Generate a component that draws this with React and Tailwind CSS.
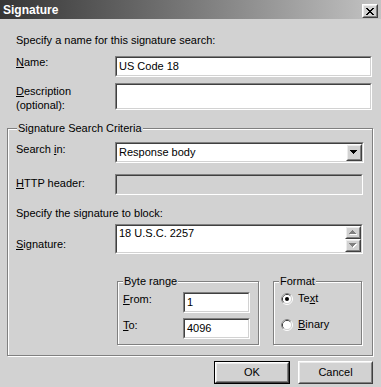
import React from "react";

function Sunken({ className = "", innerClassName = "", children }) {
  return (
    <div className={"border border-t-[#808080] border-l-[#808080] border-b-white border-r-white " + className}>
      <div className={"h-full w-full border border-t-[#404040] border-l-[#404040] border-b-[#d2d2d2] border-r-[#d2d2d2] " + innerClassName}>
        {children}
      </div>
    </div>
  );
}

function Raised({ className = "", innerClassName = "", children }) {
  return (
    <div className={"border border-t-white border-l-white border-b-[#404040] border-r-[#404040] " + className}>
      <div className={"h-full w-full border border-t-[#ececec] border-l-[#ececec] border-b-[#808080] border-r-[#808080] bg-[#d2d2d2] " + innerClassName}>
        {children}
      </div>
    </div>
  );
}

function Group({ label, className = "", labelClass = "", children }) {
  return (
    <div className={"relative border border-[#808080] shadow-[inset_1px_1px_0_#ffffff,1px_1px_0_#ffffff] " + className}>
      <span className={"absolute top-[-7px] bg-[#d2d2d2] px-[1px] leading-[13px] whitespace-nowrap " + labelClass}>{label}</span>
      {children}
    </div>
  );
}

function Radio({ checked }) {
  return (
    <svg width="12" height="12" viewBox="0 0 12 12" className="shrink-0">
      <circle cx="6" cy="6" r="5.5" fill="none" stroke="#ffffff" strokeWidth="1" />
      <path d="M2.11 9.89 A5.5 5.5 0 0 1 9.89 2.11" fill="none" stroke="#808080" strokeWidth="1" />
      <circle cx="6" cy="6" r="4.5" fill="none" stroke="#d2d2d2" strokeWidth="1" />
      <path d="M2.82 9.18 A4.5 4.5 0 0 1 9.18 2.82" fill="none" stroke="#404040" strokeWidth="1" />
      <circle cx="6" cy="6" r="4" fill="#ffffff" />
      {checked && <circle cx="6" cy="6" r="2" fill="#000000" />}
    </svg>
  );
}

function CloseGlyph() {
  const rows = [
    [0, 1, 6, 7],
    [1, 2, 5, 6],
    [2, 3, 4, 5],
    [3, 4],
    [2, 3, 4, 5],
    [1, 2, 5, 6],
    [0, 1, 6, 7],
  ];
  return (
    <svg width="8" height="7" viewBox="0 0 8 7" shapeRendering="crispEdges">
      {rows.map((cols, y) =>
        cols.map((x) => <rect key={y + "-" + x} x={x} y={y} width="1" height="1" fill="#000" />)
      )}
    </svg>
  );
}

function Arrow({ dir = "down", disabled = false }) {
  const pts = dir === "down" ? "0,0 7,0 3.5,4" : "0,4 7,4 3.5,0";
  return (
    <svg width="8" height="5" viewBox="0 0 8 5" shapeRendering="crispEdges">
      {disabled && <polygon points={dir === "down" ? "1,1 8,1 4.5,5" : "1,5 8,5 4.5,1"} fill="#ffffff" />}
      <polygon points={pts} fill={disabled ? "#808080" : "#000000"} />
    </svg>
  );
}

export default function App() {
  return (
    <div className="w-[381px] h-[387px] bg-[#d2d2d2] font-['Liberation_Sans',Arial,sans-serif] text-[11px] leading-[13px] text-black overflow-hidden flex flex-col">
      {/* Title bar */}
      <div className="h-[19px] shrink-0 flex items-start bg-linear-to-r from-[#363636] to-[#c4c4c4]">
        <span className="mt-[3px] ml-[3px] text-[12px] leading-[14px] font-bold text-white">Signature</span>
        <Raised className="ml-auto mt-[4px] mr-[3px] w-[16px] h-[14px]" innerClassName="flex items-center justify-center">
          <CloseGlyph />
        </Raised>
      </div>

      <div className="mt-[15px] ml-[16px]">Specify a name for this signature search:</div>

      <div className="mt-[9px] flex items-start">
        <div className="ml-[16px] w-[99px]">
          <span className="underline">N</span>ame:
        </div>
        <Sunken className="w-[257px] h-[21px]" innerClassName="bg-white pl-[2px] pt-[1px] leading-[14px]">
          US Code 18
        </Sunken>
      </div>

      <div className="mt-[6px] flex items-start">
        <div className="ml-[16px] w-[99px] pt-[1px] leading-[14px]">
          <span className="underline">D</span>escription
          <br />
          (optional):
        </div>
        <Sunken className="w-[257px] h-[27px]" innerClassName="bg-white" />
      </div>

      <Group
        label="Signature Search Criteria"
        labelClass="left-[9px]"
        className="mt-[16px] ml-[7px] w-[366px] h-[228px] shrink-0 flex flex-col"
      >
        <div className="mt-[13px] flex items-start">
          <div className="ml-[8px] w-[99px] pt-[1px]">
            Search <span className="underline">i</span>n:
          </div>
          <Sunken className="w-[249px] h-[21px]" innerClassName="bg-white flex items-start">
            <span className="pl-[2px] pt-[2px] leading-[13px] flex-1">Response body</span>
            <Raised className="w-[16px] h-[17px]" innerClassName="flex items-center justify-center">
              <Arrow dir="down" />
            </Raised>
          </Sunken>
        </div>

        <div className="mt-[11px] flex items-start">
          <div className="ml-[8px] w-[99px] pt-[3px]">
            <span className="underline">H</span>TTP header:
          </div>
          <Sunken className="w-[248px] h-[21px]" innerClassName="bg-[#d2d2d2]" />
        </div>

        <div className="mt-[12px] ml-[8px]">Specify the signature to block:</div>

        <div className="mt-[4px] flex items-start">
          <div className="ml-[8px] w-[99px] pt-[14px]">
            <span className="underline">S</span>ignature:
          </div>
          <Sunken className="w-[248px] h-[30px]" innerClassName="bg-white flex">
            <span className="flex-1 pl-[2px] pt-[1px]">18 U.S.C. 2257</span>
            <div className="w-[16px] flex flex-col">
              <Raised className="h-[13px]" innerClassName="flex items-center justify-center">
                <Arrow dir="up" disabled />
              </Raised>
              <Raised className="h-[13px]" innerClassName="flex items-center justify-center">
                <Arrow dir="down" disabled />
              </Raised>
            </div>
          </Sunken>
        </div>

        <div className="mt-[27px] flex items-start">
          <Group label="Byte range" labelClass="left-[5px]" className="ml-[109px] w-[142px] h-[64px] flex flex-col">
            <div className="mt-[10px] flex items-start">
              <div className="pl-[5px] w-[65px] pt-[1px]">
                <span className="underline">F</span>rom:
              </div>
              <Sunken className="w-[67px] h-[21px]" innerClassName="bg-white pl-[2px] pt-[2px]">
                1
              </Sunken>
            </div>
            <div className="mt-[5px] flex items-start">
              <div className="pl-[5px] w-[65px] pt-[1px]">
                <span className="underline">T</span>o:
              </div>
              <Sunken className="w-[67px] h-[21px]" innerClassName="bg-white pl-[2px] pt-[2px]">
                4096
              </Sunken>
            </div>
          </Group>

          <Group label="Format" labelClass="left-[5px]" className="ml-[14px] w-[89px] h-[64px] flex flex-col">
            <div className="mt-[10px] pl-[7px] flex items-center h-[13px]">
              <Radio checked />
              <span className="ml-[5px]">
                Te<span className="underline">x</span>t
              </span>
            </div>
            <div className="mt-[13px] pl-[7px] flex items-center h-[13px]">
              <Radio />
              <span className="ml-[5px]">
                <span className="underline">B</span>inary
              </span>
            </div>
          </Group>
        </div>
      </Group>

      <div className="mt-[5px] flex items-start">
        <div className="ml-[214px] w-[76px] h-[23px] border border-black">
          <Raised className="h-full w-full" innerClassName="flex items-center justify-center">
            OK
          </Raised>
        </div>
        <Raised className="ml-[8px] w-[75px] h-[23px]" innerClassName="flex items-center justify-center">
          Cancel
        </Raised>
      </div>
    </div>
  );
}
